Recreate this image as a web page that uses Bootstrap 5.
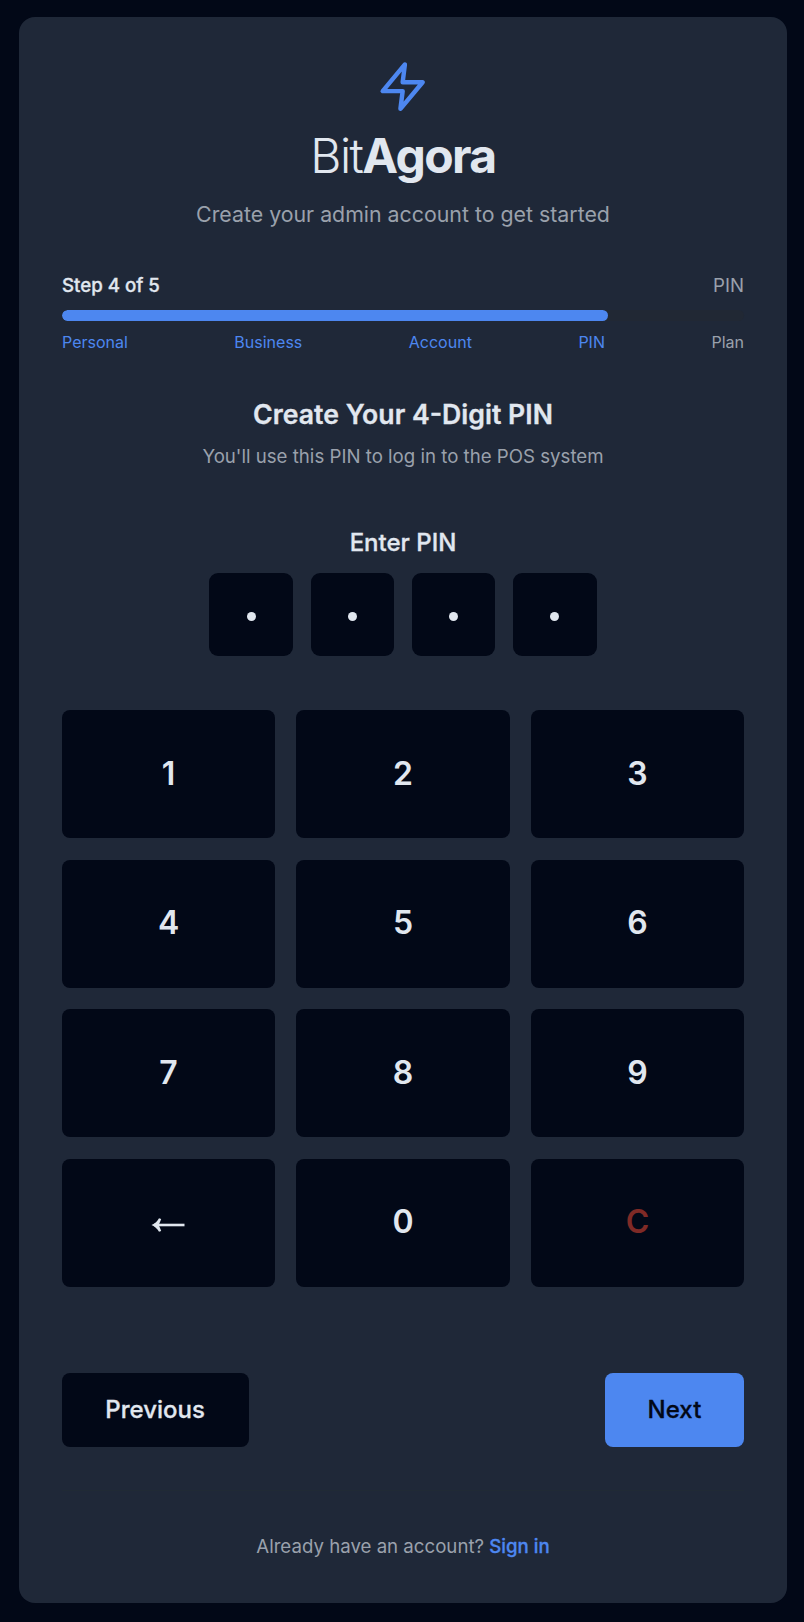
<!DOCTYPE html>
<html lang="en">
<head>
<meta charset="utf-8">
<meta name="viewport" content="width=device-width, initial-scale=1">
<title>BitAgora</title>
<link href="https://cdn.jsdelivr.net/npm/bootstrap@5.3.0/dist/css/bootstrap.min.css" rel="stylesheet">
<style>
body { background: #020817; color: #e1e7ef; font-family: Inter, "Liberation Sans", sans-serif; line-height: 1.5; padding: 17px 17px 19px 19px; -webkit-font-smoothing: antialiased; }
.panel { background: #1f2838; border-radius: 16px; height: 1586px; padding: 43px 43px 0; }
.muted { color: #9aa1ac; }
.accent { color: #4d87f0; }
.semi { font-weight: 500; -webkit-text-stroke: .3px; }
.logo { width: 53.33px; height: 53.33px; }
.brand { font-size: 48px; line-height: 53.33px; letter-spacing: -.033em; font-weight: 300; margin-top: 15.2px; }
.brand b { font-weight: 700; }
.tagline { font-size: 21.33px; line-height: 32px; margin-top: 16.3px; }
.steps { margin-top: 43px; }
.text-s { font-size: 18.67px; line-height: 26.67px; }
.text-xs { font-size: 16px; line-height: 21.33px; }
.progress { --bs-progress-bg: #212834; --bs-progress-height: 11px; border-radius: 6px; margin: 10px 0 11px; }
.progress-bar { background: #4d87f0; border-radius: 6px; }
.heading { font-size: 26.67px; line-height: 37.33px; font-weight: 600; -webkit-text-stroke: .3px; margin-top: 43px; }
.hint { margin-top: 10.67px; }
.pin-label { font-size: 24px; line-height: 37.33px; margin-top: 53px; }
.pin-row { gap: 17.8px; margin-top: 12px; }
.pin-cell { width: 83.5px; height: 83px; border-radius: 9px; background: #020817; }
.pin-cell::after { content: ""; width: 9px; height: 9px; border-radius: 50%; background: #e1e7ef; margin-top: 3px; }
.keypad { display: grid; grid-template-columns: repeat(3, 1fr); gap: 21.5px 21.33px; margin-top: 54px; }
.key { height: 128px; border: 0; border-radius: 8px; background: #020817; color: #e1e7ef; font-size: 32px; font-weight: 600; padding: 0 0 1px; }
.key svg { width: 34px; height: 16px; margin: 5px 2px 0 0; }
.key-clear { color: #7f2a26; }
.actions { margin-top: 86.5px; }
.act { border: 0; border-radius: 8px; height: 74px; font-size: 24px; }
.act-prev { background: #020817; color: #e1e7ef; padding: 0 43.8px 0 43.3px; }
.act-next { background: #4d87f0; color: #020817; padding: 0 42.7px; }
.foot { border-top: 1px solid #202a35; margin-top: 43px; padding-top: 43px; }
</style>
</head>
<body>
<main class="panel">
  <header class="text-center">
    <svg class="logo d-block mx-auto" viewBox="0 0 24 24" fill="none" stroke="#4d87f0" stroke-width="2" stroke-linecap="round" stroke-linejoin="round"><path d="M13 2 3 14h9l-1 8 10-12h-9l1-8z"/></svg>
    <h1 class="brand mb-0">Bit<b>Agora</b></h1>
    <p class="tagline muted mb-0">Create your admin account to get started</p>
  </header>

  <section class="steps">
    <div class="d-flex justify-content-between text-s">
      <span class="semi">Step 4 of 5</span><span class="muted">PIN</span>
    </div>
    <div class="progress"><div class="progress-bar" style="width:80%"></div></div>
    <div class="d-flex justify-content-between text-xs accent">
      <span>Personal</span><span>Business</span><span>Account</span><span>PIN</span><span class="muted">Plan</span>
    </div>
  </section>

  <section class="text-center">
    <h2 class="heading mb-0">Create Your 4-Digit PIN</h2>
    <p class="hint text-s muted mb-0">You'll use this PIN to log in to the POS system</p>
    <div class="pin-label semi">Enter PIN</div>
    <div class="pin-row d-flex justify-content-center">
      <div class="pin-cell d-flex align-items-center justify-content-center"></div>
      <div class="pin-cell d-flex align-items-center justify-content-center"></div>
      <div class="pin-cell d-flex align-items-center justify-content-center"></div>
      <div class="pin-cell d-flex align-items-center justify-content-center"></div>
    </div>
    <div class="keypad">
      <button class="key">1</button><button class="key">2</button><button class="key">3</button>
      <button class="key">4</button><button class="key">5</button><button class="key">6</button>
      <button class="key">7</button><button class="key">8</button><button class="key">9</button>
      <button class="key d-flex align-items-center justify-content-center" aria-label="Delete"><svg viewBox="0 0 34 16" fill="none" stroke="#e1e7ef" stroke-width="2.6"><path d="M3 8h30.500"/><path fill="#e1e7ef" stroke="none" d="M.5 8C4 6.500 6.500 4 8 1.200l2.200.8C9.300 4.500 8.600 6.300 7.400 8c1.200 1.700 1.900 3.500 2.800 6l-2.200.8C6.500 12 4 9.500.5 8z"/></svg></button><button class="key">0</button><button class="key key-clear">C</button>
    </div>
  </section>

  <div class="actions d-flex justify-content-between">
    <button class="act act-prev semi">Previous</button>
    <button class="act act-next semi">Next</button>
  </div>
  <footer class="foot text-center text-s muted">Already have an account? <a class="accent semi text-decoration-none" href="#">Sign in</a></footer>
</main>
<script src="https://cdn.jsdelivr.net/npm/bootstrap@5.3.0/dist/js/bootstrap.bundle.min.js"></script>
</body>
</html>
